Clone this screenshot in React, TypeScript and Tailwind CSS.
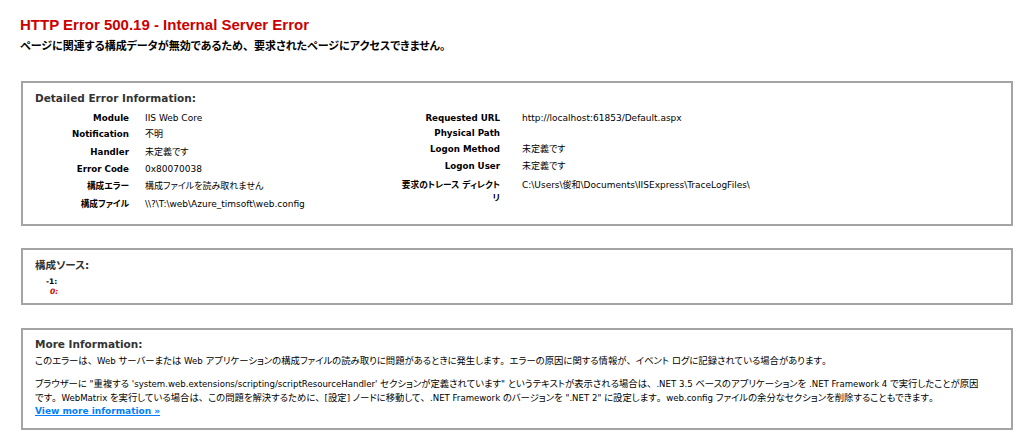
import React from "react";

function J({ t, jp = "" }: { t: string; jp?: string }) {
  const parts = t.split(/([\u3000-\u30ff\u4e00-\u9fff\uff00-\uffef]+)/);
  return (
    <>
      {parts.map((s, i) => {
        if (!s) return null;
        const isJp = /[\u3000-\u30ff\u4e00-\u9fff\uff00-\uffef]/.test(s);
        if (!isJp) return <React.Fragment key={i}>{s}</React.Fragment>;
        return (
          <span key={i} className={jp}>
            {s.split(/([、。])/).map((c, k) =>
              c === "、" || c === "。" ? (
                <span key={k} className="[font-feature-settings:normal]">
                  {c}
                </span>
              ) : (
                <React.Fragment key={k}>{c}</React.Fragment>
              )
            )}
          </span>
        );
      })}
    </>
  );
}

export default function App() {
  const leftRows: { label: string; value: string; h: string }[] = [
    { label: "Module", value: "IIS Web Core", h: "h-[15px]" },
    { label: "Notification", value: "不明", h: "h-[17px]" },
    { label: "Handler", value: "未定義です", h: "h-[18px]" },
    { label: "Error Code", value: "0x80070038", h: "h-[17px]" },
    { label: "構成エラー", value: "構成ファイルを読み取れません", h: "h-[17px]" },
    { label: "構成ファイル", value: "\\\\?\\T:\\web\\Azure_timsoft\\web.config", h: "h-[18px]" },
  ];
  const rightRows: { label: string; value: string; h: string }[] = [
    { label: "Requested URL", value: "http://localhost:61853/Default.aspx", h: "h-[15px]" },
    { label: "Physical Path", value: "", h: "h-[15px]" },
    { label: "Logon Method", value: "未定義です", h: "h-[16px]" },
    { label: "Logon User", value: "未定義です", h: "h-[18px]" },
  ];

  return (
    <div className="min-h-[441px] w-full bg-white font-['DejaVu_Sans','Noto_Sans_CJK_JP',sans-serif] text-[9px] leading-[13px] text-black [font-feature-settings:'palt']">
      <div className="pl-[21px] pr-[11px]">
        <h3 className="-ml-px pt-4 font-['Liberation_Sans','Noto_Sans_CJK_JP',sans-serif] text-[15px] font-bold leading-[18px] text-[#cc0000]">
          HTTP Error 500.19 - Internal Server Error
        </h3>
        <h4 className="-ml-px mt-[5px] text-[11px] font-bold leading-[16px]">
          <J t="ページに関連する構成データが無効であるため、要求されたページにアクセスできません。" />
        </h4>

        {/* Detailed Error Information */}
        <section className="mt-[26px] h-[145px] border-2 border-[#a4a4a4] pl-3 pt-[9px]">
          <div className="text-[10.5px] font-bold text-[#333333]">Detailed Error Information:</div>
          <div className="mt-[6px] flex">
            <div className="flex w-[355px] flex-col">
              {leftRows.map((r) => (
                <div key={r.label} className={`flex items-center ${r.h}`}>
                  <span className="w-[94px] whitespace-nowrap text-right text-[8.7px] font-bold">{r.label}</span>
                  <span className="ml-4 whitespace-nowrap">{r.value}</span>
                </div>
              ))}
            </div>
            <div className="flex flex-col">
              {rightRows.map((r) => (
                <div key={r.label} className={`flex items-center ${r.h}`}>
                  <span className="w-[110px] whitespace-nowrap text-right text-[8.7px] font-bold">{r.label}</span>
                  <span className="ml-[22px] whitespace-nowrap">{r.value}</span>
                </div>
              ))}
              <div className="flex items-start pt-[4px]">
                <span className="w-[110px] whitespace-nowrap text-right text-[8.7px] font-bold">
                  要求のトレース ディレクト
                  <br />リ
                </span>
                <span className="ml-[22px] whitespace-nowrap">C:\Users\俊和\Documents\IISExpress\TraceLogFiles\</span>
              </div>
            </div>
          </div>
        </section>

        {/* 構成ソース */}
        <section className="mt-[22px] h-[57px] border-2 border-[#a4a4a4] pl-3 pt-[9px]">
          <div className="text-[10.5px] font-bold text-[#333333]">構成ソース:</div>
          <div className="mt-[5px] text-[7.5px] font-bold leading-[10px]">
            <div className="pl-[11px]">-1:</div>
            <div className="pl-[15px] italic text-[#cc0000]">0:</div>
          </div>
        </section>

        {/* More Information */}
        <section className="mt-[23px] h-[102px] border-2 border-[#a4a4a4] pl-3 pt-[8px]">
          <div className="text-[10.5px] font-bold text-[#333333]">More Information:</div>
          <div className="text-[8.6px]">
            <p className="mb-[9px] mt-[3px] whitespace-nowrap">
              <J
                jp="text-[9.35px]"
                t="このエラーは、Web サーバーまたは Web アプリケーションの構成ファイルの読み取りに問題があるときに発生します。エラーの原因に関する情報が、イベント ログに記録されている場合があります。"
              />
            </p>
            <p className="whitespace-nowrap">
              <J
                jp="text-[9.35px]"
                t={`ブラウザーに "重複する 'system.web.extensions/scripting/scriptResourceHandler' セクションが定義されています" というテキストが表示される場合は、.NET 3.5 ベースのアプリケーションを .NET Framework 4 で実行したことが原因`}
              />
              <br />
              <J
                jp="text-[9.35px]"
                t={`です。WebMatrix を実行している場合は、この問題を解決するために、[設定] ノードに移動して、.NET Framework のバージョンを ".NET 2" に設定します。web.config ファイルの余分なセクションを削除することもできます。`}
              />
              <br />
              <a href="#" className="text-[9px] font-bold text-[#007eff] underline">
                View more information »
              </a>
            </p>
          </div>
        </section>
      </div>
    </div>
  );
}
